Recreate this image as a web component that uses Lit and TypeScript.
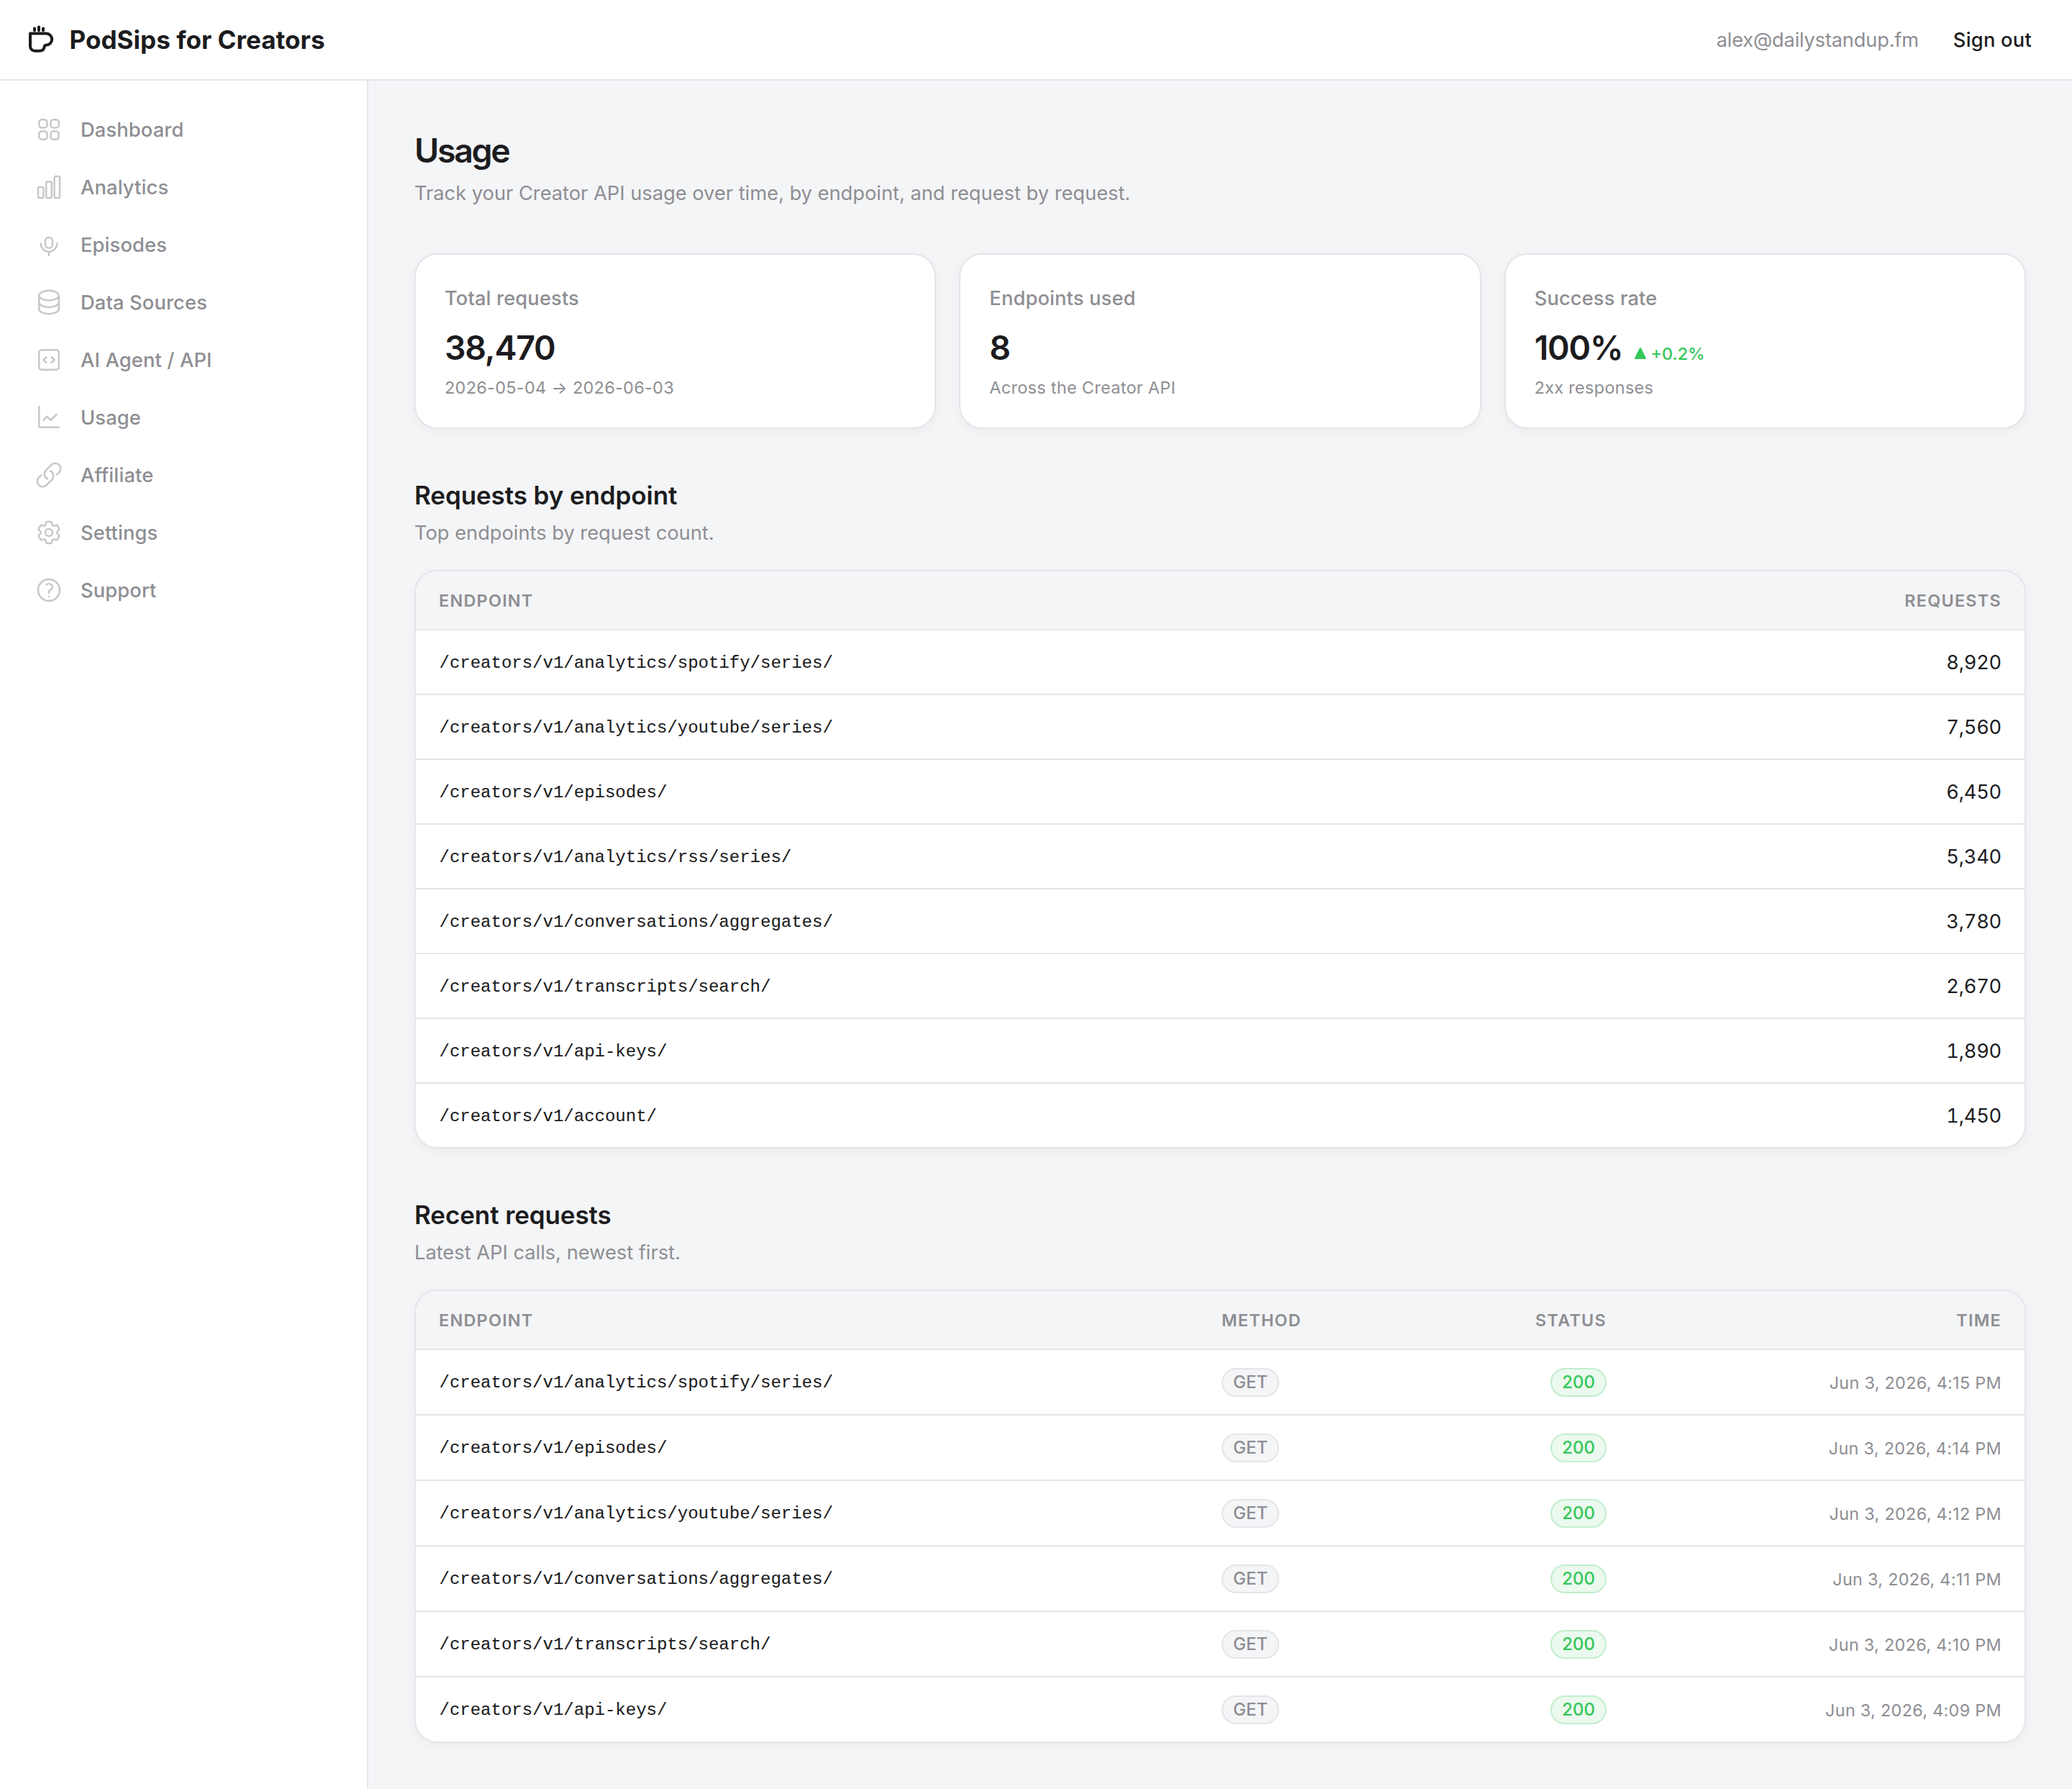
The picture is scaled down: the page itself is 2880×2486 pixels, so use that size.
import { LitElement, html, css, svg } from "lit";
import { customElement } from "lit/decorators.js";

const NAV = [
  { label: "Dashboard", d: ["M3.75 6A2.25 2.25 0 0 1 6 3.75h2.25A2.25 2.25 0 0 1 10.5 6v2.25a2.25 2.25 0 0 1-2.25 2.25H6a2.25 2.25 0 0 1-2.25-2.25V6ZM3.75 15.75A2.25 2.25 0 0 1 6 13.5h2.25a2.25 2.25 0 0 1 2.25 2.25V18a2.25 2.25 0 0 1-2.25 2.25H6A2.25 2.25 0 0 1 3.75 18v-2.25ZM13.5 6a2.25 2.25 0 0 1 2.25-2.25H18A2.25 2.25 0 0 1 20.25 6v2.25A2.25 2.25 0 0 1 18 10.5h-2.25a2.25 2.25 0 0 1-2.25-2.25V6ZM13.5 15.75a2.25 2.25 0 0 1 2.25-2.25H18a2.25 2.25 0 0 1 2.25 2.25V18A2.25 2.25 0 0 1 18 20.25h-2.25A2.25 2.25 0 0 1 13.5 18v-2.25Z"] },
  { label: "Analytics", d: ["M3 13.125C3 12.504 3.504 12 4.125 12h2.25c.621 0 1.125.504 1.125 1.125v6.75C7.5 20.496 6.996 21 6.375 21h-2.25A1.125 1.125 0 0 1 3 19.875v-6.75ZM9.75 8.625c0-.621.504-1.125 1.125-1.125h2.25c.621 0 1.125.504 1.125 1.125v11.25c0 .621-.504 1.125-1.125 1.125h-2.25a1.125 1.125 0 0 1-1.125-1.125V8.625ZM16.5 4.125c0-.621.504-1.125 1.125-1.125h2.25C20.496 3 21 3.504 21 4.125v15.75c0 .621-.504 1.125-1.125 1.125h-2.25a1.125 1.125 0 0 1-1.125-1.125V4.125Z"] },
  { label: "Episodes", d: ["M12 14.85a3 3 0 0 0 3-3V9a3 3 0 1 0-6 0v2.85a3 3 0 0 0 3 3Z", "M18.8 11a6.800 6.800 0 0 1-13.600 0M12 17.800v3.200"] },
  { label: "Data Sources", d: ["M20.25 6.375c0 2.278-3.694 4.125-8.25 4.125S3.75 8.653 3.75 6.375m16.5 0c0-2.278-3.694-4.125-8.25-4.125S3.75 4.097 3.75 6.375m16.5 0v11.25c0 2.278-3.694 4.125-8.25 4.125s-8.25-1.847-8.25-4.125V6.375M20.25 12c0 2.278-3.694 4.125-8.25 4.125S3.75 14.278 3.75 12"] },
  { label: "AI Agent / API", d: ["M14.25 9.75 16.5 12l-2.25 2.25m-4.5 0L7.5 12l2.25-2.25M6 20.25h12A2.25 2.25 0 0 0 20.25 18V6A2.25 2.25 0 0 0 18 3.75H6A2.25 2.25 0 0 0 3.75 6v12A2.25 2.25 0 0 0 6 20.25Z"] },
  { label: "Usage", d: ["M3.75 3v16.5c0 .414.336.75.75.75h15.75M7.5 14.25l2.75-3 3.25 3 4.875-4.75"] },
  { label: "Affiliate", d: ["M13.19 8.688a4.5 4.5 0 0 1 1.242 7.244l-4.5 4.5a4.5 4.5 0 0 1-6.364-6.364l1.757-1.757m13.35-.622 1.757-1.757a4.5 4.5 0 0 0-6.364-6.364l-4.5 4.5a4.5 4.5 0 0 0 1.242 7.244"] },
  { label: "Settings", d: ["M9.594 3.94c.09-.542.56-.94 1.11-.94h2.593c.55 0 1.02.398 1.11.94l.213 1.281c.063.374.313.686.645.87.074.04.147.083.22.127.325.196.72.257 1.075.124l1.217-.456a1.125 1.125 0 0 1 1.37.49l1.296 2.247a1.125 1.125 0 0 1-.26 1.431l-1.003.827c-.293.241-.438.613-.43.992a7.723 7.723 0 0 1 0 .255c-.008.378.137.75.43.991l1.004.827c.424.35.534.955.26 1.43l-1.298 2.247a1.125 1.125 0 0 1-1.369.491l-1.217-.456c-.355-.133-.75-.072-1.076.124a6.47 6.47 0 0 1-.22.128c-.331.183-.581.495-.644.869l-.213 1.281c-.09.543-.56.94-1.11.94h-2.594c-.55 0-1.019-.398-1.11-.94l-.213-1.281c-.062-.374-.312-.686-.644-.87a6.52 6.52 0 0 1-.22-.127c-.325-.196-.72-.257-1.076-.124l-1.217.456a1.125 1.125 0 0 1-1.369-.49l-1.297-2.247a1.125 1.125 0 0 1 .26-1.431l1.004-.827c.292-.24.437-.613.43-.991a6.932 6.932 0 0 1 0-.255c.007-.38-.138-.751-.43-.992l-1.004-.827a1.125 1.125 0 0 1-.26-1.43l1.297-2.247a1.125 1.125 0 0 1 1.37-.491l1.216.456c.356.133.751.072 1.076-.124.072-.044.146-.086.22-.128.332-.183.582-.495.644-.869l.214-1.28Z", "M15 12a3 3 0 1 1-6 0 3 3 0 0 1 6 0Z"] },
  { label: "Support", d: ["M9.879 7.519c1.171-1.025 3.071-1.025 4.242 0 1.172 1.025 1.172 2.687 0 3.712-.203.179-.43.326-.67.442-.745.361-1.45.999-1.45 1.827v.75M21 12a9 9 0 1 1-18 0 9 9 0 0 1 18 0Zm-9 5.25h.008v.008H12v-.008Z"] },
];

const ENDPOINTS: [string, string][] = [
  ["/creators/v1/analytics/spotify/series/", "8,920"],
  ["/creators/v1/analytics/youtube/series/", "7,560"],
  ["/creators/v1/episodes/", "6,450"],
  ["/creators/v1/analytics/rss/series/", "5,340"],
  ["/creators/v1/conversations/aggregates/", "3,780"],
  ["/creators/v1/transcripts/search/", "2,670"],
  ["/creators/v1/api-keys/", "1,890"],
  ["/creators/v1/account/", "1,450"],
];

const RECENT: [string, string][] = [
  ["/creators/v1/analytics/spotify/series/", "Jun 3, 2026, 4:15 PM"],
  ["/creators/v1/episodes/", "Jun 3, 2026, 4:14 PM"],
  ["/creators/v1/analytics/youtube/series/", "Jun 3, 2026, 4:12 PM"],
  ["/creators/v1/conversations/aggregates/", "Jun 3, 2026, 4:11 PM"],
  ["/creators/v1/transcripts/search/", "Jun 3, 2026, 4:10 PM"],
  ["/creators/v1/api-keys/", "Jun 3, 2026, 4:09 PM"],
];

@customElement("app-root")
export class AppRoot extends LitElement {
  static styles = css`
    :host {
      display: flex;
      flex-direction: column;
      box-sizing: border-box;
      height: 2486px;
      overflow: hidden;
      background: #f4f5f7;
      color: #1c1c1e;
      font-family: Inter, "Liberation Sans", sans-serif;
      font-size: 27.25px;
      line-height: 40px;
    }
    * { box-sizing: border-box; }
    .top {
      display: flex;
      align-items: center;
      height: 112px;
      flex: none;
      padding: 0 56px 0 36px;
      background: #fff;
      border-bottom: 2px solid #e5e5ea;
    }
    .logo { width: 44px; height: 44px; flex: none; }
    .brand { margin-left: 16.5px; font-size: 35px; font-weight: 700; letter-spacing: 0.05px; flex: 1; }
    .email { padding-top: 1px; color: #8e8e93; letter-spacing: -0.2px; }
    .out { padding-top: 1px; margin-left: 48px; font-weight: 500; letter-spacing: 0.25px; }
    .body { display: flex; flex: 1; }
    .side {
      width: 512px;
      flex: none;
      padding: 28px 0;
      background: #fff;
      border-right: 2px solid #e5e5ea;
    }
    .item {
      display: flex;
      align-items: center;
      gap: 24px;
      height: 80px;
      padding-left: 48px;
      color: #8e8e93;
      font-weight: 500;
      letter-spacing: 0.15px;
    }
    .item span { padding-top: 2px; }
    .icon { width: 40px; height: 40px; flex: none; color: #c7c7cc; }
    .main { flex: 1; padding: 64px; }
    h1 { margin: 0; font-size: 46.5px; line-height: 66px; font-weight: 600; letter-spacing: -2.3px; }
    h2 { margin: 0; font-size: 35px; line-height: 48px; font-weight: 600; letter-spacing: -0.09px; }
    p { height: 40px; line-height: 42px; margin: 8px 0 0; color: #8e8e93; }
    .lede { margin-top: 6px; }
    .cards { display: grid; grid-template-columns: repeat(3, 1fr); gap: 32px; margin-top: 64px; }
    .card {
      height: 244px;
      padding: 40px;
      background: #fff;
      border: 2px solid #e5e5ea;
      border-radius: 32px;
      box-shadow: 0 4px 16px rgba(0, 0, 0, 0.04);
    }
    .label { height: 40px; line-height: 42px; color: #8e8e93; font-weight: 500; letter-spacing: 0.15px; }
    .value {
      display: flex;
      align-items: baseline;
      height: 64px;
      margin-top: 17px;
      font-size: 46.5px;
      line-height: 64px;
      font-weight: 600;
      letter-spacing: -1.25px;
    }
    .delta {
      display: flex;
      align-items: baseline;
      gap: 5px;
      margin-left: 16px;
      color: #34c759;
      font-size: 23.5px;
      line-height: 32px;
      font-weight: 500;
      letter-spacing: 0;
    }
    .tri { width: 18px; height: 18px; }
    .note { color: #8e8e93; font-size: 23.4px; line-height: 32px; margin-top: 8px; letter-spacing: 0.33px; }
    .section { margin-top: 68px; }
    .table {
      margin-top: 32px;
      background: #fff;
      border: 2px solid #e5e5ea;
      border-radius: 32px;
      overflow: hidden;
      box-shadow: 0 4px 16px rgba(0, 0, 0, 0.04);
    }
    .row { display: flex; align-items: center; height: 90px; padding: 0 32px; border-bottom: 2px solid #e5e5ea; }
    .row:last-child { height: 88px; border-bottom: none; }
    .recent .row { height: 91px; }
    .recent .row:last-child { height: 89px; }
    .table .head { height: 82px; padding-top: 1px; background: #f4f5f7; color: #8e8e93; font-size: 23.4px; font-weight: 600; letter-spacing: 1.25px; }
    .grow { flex: 1; }
    .mono { padding: 3px 0 0 0.5px; font-family: "Liberation Mono", monospace; font-size: 24px; -webkit-text-stroke: 0.12px currentColor; }
    .num { padding-top: 2px; font-variant-numeric: tabular-nums; letter-spacing: -0.25px; }
    .method { width: 270px; }
    .status { width: 265px; display: flex; justify-content: flex-end; }
    .time { width: 549px; text-align: right; color: #8e8e93; font-size: 23.4px; letter-spacing: 0.3px; }
    .row:not(.head) .time { padding-top: 2px; }
    .head .time { color: inherit; letter-spacing: inherit; }
    .pill {
      display: inline-flex;
      align-items: center;
      height: 40px;
      padding: 1px 14px 0;
      border: 2px solid #e5e5ea;
      border-radius: 20px;
      background: #f4f5f7;
      color: #8e8e93;
      font-size: 24px;
      font-weight: 500;
      line-height: 36px;
    }
    .ok { color: #34c759; background: #ebf9ee; border-color: #c2eecd; }
  `;

  private icon(paths: string[]) {
    return html`<svg class="icon" viewBox="0 0 24 24" fill="none" stroke="currentColor" stroke-width="1.5" stroke-linecap="round" stroke-linejoin="round">
      ${paths.map((d) => svg`<path d=${d}></path>`)}
    </svg>`;
  }

  render() {
    return html`
      <header class="top">
        <svg class="logo" viewBox="0 0 44 44" fill="none" stroke="#1c1c1e" stroke-width="4" stroke-linecap="round" stroke-linejoin="round">
          <path d="M6 13.4H28a8.200 8.200 0 0 1 0 16.400c-1.400 0-2 .6-2.200 1.800-.5 3.800-2.600 6.100-6.200 6.100H12.500A6.500 6.500 0 0 1 6 31.200Z"></path>
          <path d="M12 6.600v2.600M18 4.500v4.700M24 6.600v2.600"></path>
        </svg>
        <div class="brand">PodSips for Creators</div>
        <div class="email">alex@dailystandup.fm</div>
        <div class="out">Sign out</div>
      </header>
      <div class="body">
        <nav class="side">
          ${NAV.map((n) => html`<div class="item">${this.icon(n.d)}<span>${n.label}</span></div>`)}
        </nav>
        <main class="main">
          <h1>Usage</h1>
          <p class="lede">Track your Creator API usage over time, by endpoint, and request by request.</p>
          <div class="cards">
            <div class="card">
              <div class="label">Total requests</div>
              <div class="value">38,470</div>
              <div class="note">2026-05-04 → 2026-06-03</div>
            </div>
            <div class="card">
              <div class="label">Endpoints used</div>
              <div class="value">8</div>
              <div class="note">Across the Creator API</div>
            </div>
            <div class="card">
              <div class="label">Success rate</div>
              <div class="value">100%<span class="delta"><svg class="tri" viewBox="0 0 18 18"><path d="M9 2 16 16H2Z" fill="#34c759" stroke="#34c759" stroke-width="2" stroke-linejoin="round"></path></svg>+0.2%</span></div>
              <div class="note">2xx responses</div>
            </div>
          </div>
          <section class="section">
            <h2>Requests by endpoint</h2>
            <p>Top endpoints by request count.</p>
            <div class="table">
              <div class="row head"><span class="grow">ENDPOINT</span><span>REQUESTS</span></div>
              ${ENDPOINTS.map(([path, n]) => html`<div class="row"><span class="grow mono">${path}</span><span class="num">${n}</span></div>`)}
            </div>
          </section>
          <section class="section">
            <h2>Recent requests</h2>
            <p>Latest API calls, newest first.</p>
            <div class="table recent">
              <div class="row head"><span class="grow">ENDPOINT</span><span class="method">METHOD</span><span class="status">STATUS</span><span class="time">TIME</span></div>
              ${RECENT.map(([path, t]) => html`<div class="row"><span class="grow mono">${path}</span><span class="method"><span class="pill">GET</span></span><span class="status"><span class="pill ok">200</span></span><span class="time">${t}</span></div>`)}
            </div>
          </section>
        </main>
      </div>
    `;
  }
}
